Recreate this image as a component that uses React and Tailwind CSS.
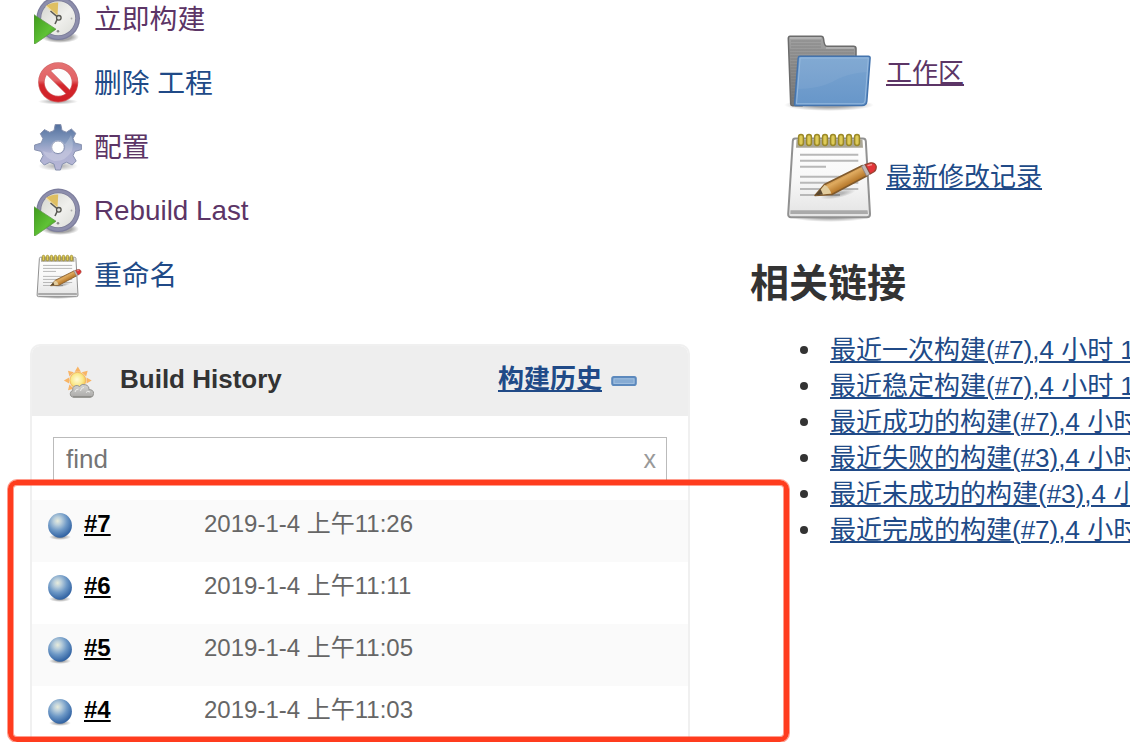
import React from "react";

function BuildIcon() {
  return (
    <svg viewBox="0 0 48 48" className="size-12 shrink-0">
      <defs>
        <radialGradient id="clock-shadow">
          <stop offset="0.6" stopColor="#000" stopOpacity="0.35" />
          <stop offset="1" stopColor="#000" stopOpacity="0" />
        </radialGradient>
        <linearGradient id="clock-face" x1="0" y1="0" x2="1" y2="1">
          <stop offset="0" stopColor="#d2d3cd" />
          <stop offset="0.55" stopColor="#f0f0ed" />
          <stop offset="1" stopColor="#dcddd8" />
        </linearGradient>
        <linearGradient id="clock-play" x1="0" y1="0" x2="1" y2="1">
          <stop offset="0" stopColor="#3f9a1c" />
          <stop offset="0.6" stopColor="#5fc235" />
          <stop offset="1" stopColor="#3c8f1d" />
        </linearGradient>
      </defs>
      <ellipse cx="26" cy="41" rx="19" ry="6" fill="url(#clock-shadow)" />
      <circle cx="24.2" cy="22.3" r="21.8" fill="#7c7d9c" />
      <circle cx="24.2" cy="22.3" r="20.6" fill="#8d8eac" />
      <circle cx="24.2" cy="22.3" r="17.8" fill="#7b7c97" />
      <circle cx="24.2" cy="22.3" r="17" fill="url(#clock-face)" />
      <path d="M23.5 20 L12 10 Q17 6.2 24.2 6.5 Z" fill="#dfbf62" />
      <path d="M12 10 L23.5 20" stroke="#efdfae" strokeWidth="1.5" />
      <circle cx="37.5" cy="22.5" r="0.9" fill="#aaa" />
      <circle cx="24" cy="35.2" r="1.3" fill="#888" />
      <path d="M16.5 15 L24 21.5 L21 28" fill="none" stroke="#5c5c58" strokeWidth="1.6" />
      <circle cx="24.8" cy="21.8" r="2.3" fill="#deded8" stroke="#55554f" strokeWidth="1.3" />
      <path d="M0 18.7 L22 33.2 L1.2 47.8 L0 47.8 Z" fill="url(#clock-play)" stroke="#5b9245" strokeWidth="0.7" />
    </svg>
  );
}

function DeleteIcon() {
  return (
    <svg viewBox="0 0 48 48" className="size-12 shrink-0">
      <defs>
        <linearGradient id="stop-red" gradientUnits="userSpaceOnUse" x1="0" y1="2" x2="0" y2="43">
          <stop offset="0" stopColor="#e57373" />
          <stop offset="0.45" stopColor="#e26265" />
          <stop offset="0.56" stopColor="#d3262c" />
          <stop offset="1" stopColor="#d01f26" />
        </linearGradient>
        <radialGradient id="stop-shadow">
          <stop offset="0" stopColor="#000" stopOpacity="0.4" />
          <stop offset="1" stopColor="#000" stopOpacity="0" />
        </radialGradient>
      </defs>
      <ellipse cx="24" cy="41.5" rx="20" ry="3" fill="url(#stop-shadow)" />
      <circle cx="24.2" cy="22.3" r="16.8" fill="#fdfdfd" stroke="#d26a6c" strokeWidth="6.6" />
      <path d="M12.5 10.5 L36 34" stroke="#d26a6c" strokeWidth="6" />
      <circle cx="24.2" cy="22.3" r="16.8" fill="none" stroke="url(#stop-red)" strokeWidth="5.2" />
      <path d="M12.5 10.5 L36 34" stroke="url(#stop-red)" strokeWidth="4.8" />
    </svg>
  );
}

function GearIcon() {
  return (
    <svg viewBox="0 0 48 48" className="size-12 shrink-0">
      <defs>
        <linearGradient id="gear-fill" x1="0.5" y1="0" x2="0.5" y2="1">
          <stop offset="0" stopColor="#526f9d" />
          <stop offset="0.35" stopColor="#8298bd" />
          <stop offset="0.6" stopColor="#adb1d2" />
          <stop offset="1" stopColor="#b7b6d6" />
        </linearGradient>
        <radialGradient id="gear-shadow">
          <stop offset="0" stopColor="#000" stopOpacity="0.35" />
          <stop offset="1" stopColor="#000" stopOpacity="0" />
        </radialGradient>
      </defs>
      <ellipse cx="24" cy="42" rx="20" ry="5" fill="url(#gear-shadow)" />
      <g stroke="#8791af" strokeWidth="1" strokeLinejoin="round">
        <path
          fillRule="evenodd"
          fill="url(#gear-fill)"
          d="M21.2 .5 H26.8 L28 6.4 L32.3 8.2 L37.4 5 L41.8 9.3 L39 14.5 L40.8 19 L47.4 20.6 V25.6 L40.9 27.4 L39.1 31.6 L42.2 37 L38.2 41 L32.6 38.2 L28.4 40 L26.4 46 H21.6 L20 40 L15.7 38.3 L10.3 41 L6.3 37 L9.1 31.7 L7.2 27.4 L.6 25.8 V21 L7.1 19.1 L9 14.7 L6.3 9.7 L10.4 5.6 L15.7 8.3 L20 6.5 Z M24 17 A6.3 6.3 0 1 0 24 29.6 A6.3 6.3 0 1 0 24 17 Z"
        />
      </g>
      <path d="M9 27 Q25 34 37 11 Q40 18 38 27 Q31 38 20 37 Q11 34 9 27Z M24 16 A7.3 7.3 0 1 0 24 30.6 A7.3 7.3 0 1 0 24 16 Z" fillRule="evenodd" fill="#fff" opacity="0.2" />
    </svg>
  );
}

function NotepadIcon({ className }) {
  const rings = [19, 27, 35, 43, 51, 59, 67, 75];
  return (
    <svg viewBox="0 0 96 96" className={className}>
      <defs>
        <linearGradient id="pad-paper" x1="0" y1="0" x2="0" y2="1">
          <stop offset="0" stopColor="#fff" />
          <stop offset="0.5" stopColor="#f8f8f8" />
          <stop offset="1" stopColor="#e3e3e3" />
        </linearGradient>
        <linearGradient id="pad-pencil" gradientUnits="userSpaceOnUse" x1="58" y1="46" x2="65" y2="59">
          <stop offset="0" stopColor="#b9823a" />
          <stop offset="0.35" stopColor="#dfab60" />
          <stop offset="1" stopColor="#b07022" />
        </linearGradient>
        <radialGradient id="pad-shadow">
          <stop offset="0.3" stopColor="#000" stopOpacity="0.4" />
          <stop offset="1" stopColor="#000" stopOpacity="0" />
        </radialGradient>
      </defs>
      <ellipse cx="48" cy="88" rx="42" ry="6" fill="url(#pad-shadow)" />
      <path d="M13 10.5 H81 Q83.5 10.5 83.8 13 L88 86 Q88 89.3 85 89.3 H9 Q6 89.3 6.2 86 L10.8 13 Q11 10.5 13 10.5 Z" fill="url(#pad-paper)" stroke="#919191" strokeWidth="2" />
      <path d="M14.5 11.5 H80.5 L81 19.7 H14 Z" fill="#aaa696" />
      <path d="M8.5 82.2 H85.5 L86 86 H8.3 Z" fill="#aaa" />
      {rings.map((x) => (
        <rect key={x} x={x - 2.4} y="6.5" width="4.8" height="11" rx="2.4" fill="#decb58" stroke="#9b8928" strokeWidth="1.5" />
      ))}
      <path d="M18 26.8H76.3M18 32.8H76.3M18 38.8H44M18 48.8H76.3M18 54.8H76.3M18 61H76.3M18 67H58" stroke="#b8b8b8" strokeWidth="2" />
      <ellipse cx="56" cy="66" rx="18" ry="4" transform="rotate(-12 56 66)" fill="url(#pad-shadow)" opacity="0.6" />
      <path d="M33 67.5 L42.5 56.5 L80.5 37.5 L85.5 47.5 L50 66.5 Z" fill="url(#pad-pencil)" stroke="#805a2c" strokeWidth="1.6" strokeLinejoin="round" />
      <path d="M34 67.2 L42.5 57 Q47 59 49.3 65.5 Z" fill="#e2cd9f" />
      <path d="M33 67.5 L38.5 61 L41 66.5 Z" fill="#5a4830" />
      <path d="M79.5 38.2 L83.5 36.2 L88.5 45.8 L84.5 48 Z" fill="#bdb8b8" stroke="#887c78" strokeWidth="0.8" />
      <path d="M83.3 36.6 L88.3 34.9 Q93 34.3 94.2 38.2 Q94.6 41.8 92 43.7 L88.2 46 Z" fill="#e43438" stroke="#944332" strokeWidth="1.2" />
      <path d="M85.5 37.6 L90 36.5" stroke="#f39890" strokeWidth="1.4" />
    </svg>
  );
}

function FolderIcon() {
  const ribs = [17, 20, 23, 26, 29, 32, 35, 38, 41, 44, 47, 50, 53, 56, 59, 62, 65, 68, 71, 74, 77];
  return (
    <svg viewBox="0 0 96 96" className="size-24 shrink-0">
      <defs>
        <linearGradient id="folder-back" x1="0" y1="0" x2="0" y2="1">
          <stop offset="0" stopColor="#a2a2a2" />
          <stop offset="1" stopColor="#757575" />
        </linearGradient>
        <linearGradient id="folder-front" x1="0" y1="0" x2="0" y2="1">
          <stop offset="0" stopColor="#7ba5d1" />
          <stop offset="1" stopColor="#6796c9" />
        </linearGradient>
        <radialGradient id="folder-shadow">
          <stop offset="0.4" stopColor="#000" stopOpacity="0.35" />
          <stop offset="1" stopColor="#000" stopOpacity="0" />
        </radialGradient>
      </defs>
      <ellipse cx="47" cy="81" rx="45" ry="6" fill="url(#folder-shadow)" />
      <path d="M8 12.3 H39 Q41.3 12.3 41.6 15 Q42.2 22.3 45 22.3 H71.5 Q74 22.3 74 24.5 V60 L20 81.7 H10.5 Q8.8 81.7 8.7 80 L6.3 14.5 Q6.2 12.3 8 12.3 Z" fill="url(#folder-back)" stroke="#6b6b6b" strokeWidth="1.5" />
      {ribs.map((y) => (
        <path key={y} d={y < 25 ? `M9 ${y}H39` : `M${8 + (y - 25) * 0.04} ${y}H${y < 33 ? 72 : 16}`} stroke="#6e6e6e" strokeWidth="0.9" opacity="0.5" />
      ))}
      <path d="M8 14 H39.5 M44 24H72" stroke="#c4c4c4" strokeWidth="1" />
      <path d="M18 32.3 H86.5 Q88.2 32.3 88.1 34 L84.8 77.5 Q84.3 81.6 80 81.6 H13.5 Q12.4 81.6 12.6 80 L16.2 34 Q16.4 32.3 18 32.3 Z" fill="url(#folder-front)" stroke="#4474ae" strokeWidth="1.5" />
      <path d="M18 34 H86.3 L85.2 48 Q65 49 50 58 Q36 65 15.7 65 Z" fill="#fff" opacity="0.06" />
      <path d="M18.2 34 H86.3 L83 77 Q82.7 79.8 80 79.8 H14.5 Z" fill="none" stroke="#96b9de" strokeWidth="1" />
    </svg>
  );
}

function WeatherIcon() {
  return (
    <svg viewBox="0 0 32 32" className="size-8 shrink-0">
      <defs>
        <radialGradient id="sun-fill" cx="0.45" cy="0.45" r="0.6">
          <stop offset="0" stopColor="#fffbd8" />
          <stop offset="0.6" stopColor="#fae98b" />
          <stop offset="1" stopColor="#f3bd49" />
        </radialGradient>
        <linearGradient id="cloud-fill" x1="0" y1="0" x2="0" y2="1">
          <stop offset="0" stopColor="#d5d5d3" />
          <stop offset="1" stopColor="#aaa9a7" />
        </linearGradient>
      </defs>
      <g fill="#f8b465">
        {[0, 45, 90, 135, 180, 225, 270, 315].map((a) => (
          <path key={a} d="M12.7 5.8 L15.8 .6 L18.9 5.8 Z" transform={`rotate(${a} 15.8 14.5)`} />
        ))}
      </g>
      <circle cx="15.8" cy="14.3" r="8" fill="url(#sun-fill)" stroke="#f2ae50" strokeWidth="0.8" />
      <path d="M12 31.3 Q8 31 8.3 27.5 Q8.5 24.9 10.8 24.6 Q10 20.6 13.8 19.6 Q16 19.2 17.5 20.5 Q19.7 17.3 23.7 18.8 Q27.4 20 26.9 23.6 Q31.6 23.6 31.6 27.5 Q31.6 31.3 28 31.3 Z" fill="url(#cloud-fill)" stroke="#959592" strokeWidth="1" />
      <path d="M13 26 Q13.5 23 16.5 23 M18.5 25 Q18.8 21.5 22 21.5 M24 26.5 Q25.5 24.5 28 26" fill="none" stroke="#ececea" strokeWidth="1" />
      <path d="M11 30.8 H29.5" stroke="#858581" strokeWidth="1" />
    </svg>
  );
}

function BallIcon() {
  return (
    <svg viewBox="0 0 26 30" className="h-[30px] w-[26px] shrink-0">
      <defs>
        <radialGradient id="ball-fill" cx="0.4" cy="0.32" r="0.66">
          <stop offset="0" stopColor="#e8ecdc" />
          <stop offset="0.25" stopColor="#b9cedb" />
          <stop offset="0.6" stopColor="#6d98c6" />
          <stop offset="1" stopColor="#3465a4" />
        </radialGradient>
        <radialGradient id="ball-shadow">
          <stop offset="0.2" stopColor="#000" stopOpacity="0.4" />
          <stop offset="1" stopColor="#000" stopOpacity="0" />
        </radialGradient>
      </defs>
      <ellipse cx="13" cy="26" rx="11" ry="3" fill="url(#ball-shadow)" />
      <ellipse cx="13" cy="14.4" rx="11.9" ry="12.3" fill="url(#ball-fill)" />
    </svg>
  );
}

function CollapseIcon() {
  return (
    <svg viewBox="0 0 26 10" className="h-[10px] w-[26px] shrink-0">
      <rect x="1.3" y="1.2" width="23.4" height="7.8" rx="1.4" fill="#86abd3" stroke="#5c89bd" strokeWidth="2.2" />
      <rect x="3" y="2.8" width="20" height="4.6" fill="none" stroke="#a4c1e0" strokeWidth="0.9" />
    </svg>
  );
}

const tasks = [
  { label: "立即构建", icon: <BuildIcon />, style: "-mt-px text-[#5c3566]" },
  { label: "删除 工程", icon: <DeleteIcon />, style: "-mt-px text-[#204a87]" },
  { label: "配置", icon: <GearIcon />, style: "-mt-px text-[#5c3566]" },
  { label: "Rebuild Last", icon: <BuildIcon />, style: "-mt-[3px] text-[#5c3566]" },
  { label: "重命名", icon: <NotepadIcon className="size-12 shrink-0" />, style: "-mt-px text-[#204a87]" },
];

const builds = [
  { id: "#7", time: "2019-1-4 上午11:26" },
  { id: "#6", time: "2019-1-4 上午11:11" },
  { id: "#5", time: "2019-1-4 上午11:05" },
  { id: "#4", time: "2019-1-4 上午11:03" },
];

const permalinks = [
  "最近一次构建(#7),4 小时 1",
  "最近稳定构建(#7),4 小时 1",
  "最近成功的构建(#7),4 小时",
  "最近失败的构建(#3),4 小时",
  "最近未成功的构建(#3),4 小",
  "最近完成的构建(#7),4 小时",
];

export default function App() {
  return (
    <div className="relative flex h-[742px] w-[1130px] overflow-hidden bg-white font-['Liberation_Sans','Noto_Sans_CJK_SC',sans-serif] text-[26px] text-[#333]">
      <aside className="flex w-[690px] shrink-0 flex-col pl-[30px]">
        <nav className="-mt-1 flex flex-col gap-4 pl-1">
          {tasks.map((t) => (
            <a key={t.label} className="flex h-12 items-center gap-3">
              {t.icon}
              <span className={`text-[27.8px] leading-10 ${t.style}`}>{t.label}</span>
            </a>
          ))}
        </nav>

        <section className="mt-11 h-[420px] shrink-0 rounded-t-[10px] border-2 border-[#f0f0f0]">
          <header className="flex h-[70px] items-center rounded-t-lg bg-[#eee] pb-1 pl-[30px]">
            <span className="mt-1.5">
              <WeatherIcon />
            </span>
            <h2 className="ml-[26px] font-bold leading-9">Build History</h2>
            <a className="ml-auto font-bold leading-9 text-[#204a87] underline decoration-2 underline-offset-2">构建历史</a>
            <span className="ml-[9px] mr-[51px] mt-1">
              <CollapseIcon />
            </span>
          </header>
          <div className="px-[21px] pt-[21px]">
            <div className="flex h-[46px] items-center justify-between border border-[#bbb] pb-0.5 pl-3 pr-[10px] leading-9">
              <span className="text-[#757575]">find</span>
              <span className="text-[25px] text-[#999]">x</span>
            </div>
          </div>
          <ul className="mt-[17px]">
            {builds.map((b) => (
              <li key={b.id} className="flex h-[62px] pl-[15px] pt-[7px] text-2xl leading-[34px] odd:bg-[#fafafa]">
                <span className="mt-1">
                  <BallIcon />
                </span>
                <a className="ml-[11px] w-[120px] font-bold text-black underline decoration-2 underline-offset-2">{b.id}</a>
                <span className="text-[#666]">{b.time}</span>
              </li>
            ))}
          </ul>
        </section>
      </aside>

      <main className="flex min-w-0 flex-1 flex-col pl-[60px] pt-6">
        <div className="flex flex-col gap-2 pl-8">
          <div className="flex h-24 items-center gap-2">
            <FolderIcon />
            <a className="mt-0.5 leading-9 text-[#5c3566] underline decoration-2 underline-offset-2">工作区</a>
          </div>
          <div className="flex h-24 items-center gap-2">
            <NotepadIcon className="size-24 shrink-0" />
            <a className="mt-0.5 leading-9 text-[#204a87] underline decoration-2 underline-offset-2">最新修改记录</a>
          </div>
        </div>
        <h2 className="mt-[34px] h-[74px] text-[39px] font-bold leading-[52px]">相关链接</h2>
        <ul className="pl-[50px]">
          {permalinks.map((p) => (
            <li key={p} className="flex h-9 items-center gap-[22px] whitespace-nowrap">
              <span className="size-2 shrink-0 rounded-full bg-[#333]" />
              <a className="leading-9 text-[#204a87] underline decoration-2 underline-offset-2">{p}</a>
            </li>
          ))}
        </ul>
      </main>

      <div className="pointer-events-none absolute left-2 top-[480px] h-[262px] w-[781px] rounded-[9px] border-5 border-[#ff3c1e] shadow-[0_0_0_1px_rgba(255,60,30,0.5),inset_0_0_0_1px_rgba(255,60,30,0.5)]" />
    </div>
  );
}
